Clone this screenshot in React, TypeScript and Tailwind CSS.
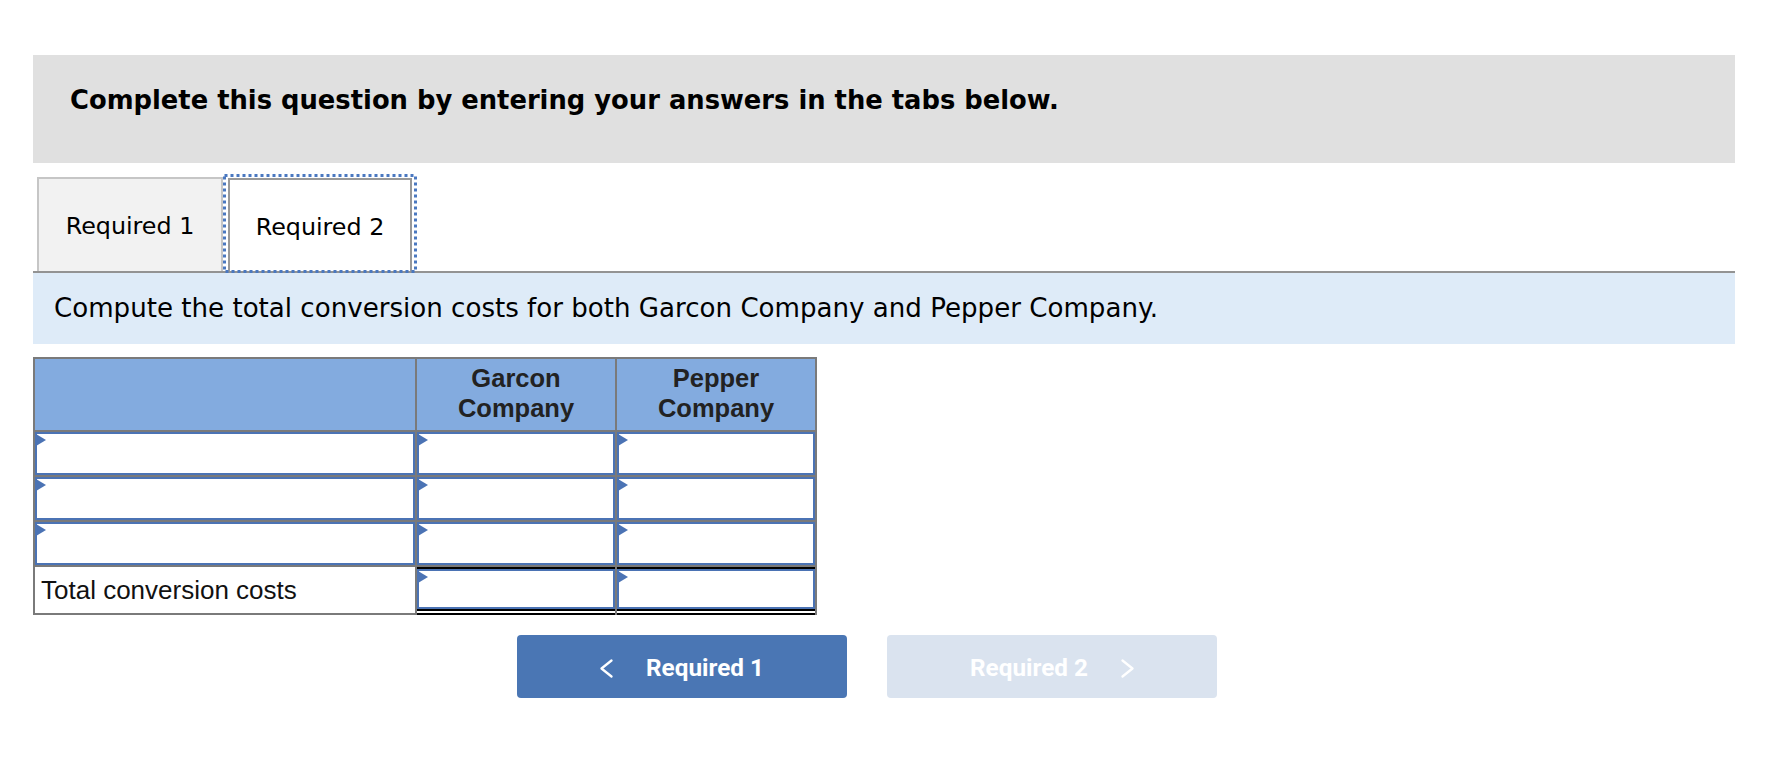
import React from 'react';

function Arrow({ dir }: { dir: 'left' | 'right' }) {
  return (
    <svg width="13" height="19" viewBox="0 0 13 19" fill="none">
      <polyline
        points={dir === 'left' ? '11.5,1.5 1.5,9.5 11.5,17.5' : '1.5,1.5 11.5,9.5 1.5,17.5'}
        stroke="white"
        strokeWidth="2.3"
        strokeLinecap="round"
        strokeLinejoin="round"
      />
    </svg>
  );
}

function Field({ className = '' }: { className?: string }) {
  return (
    <div className={`relative border-2 border-[#4b73b4] bg-white ${className}`}>
      <span className="absolute -left-[1px] top-0 h-0 w-0 border-y-[6px] border-l-[10px] border-y-transparent border-l-[#4b73b4]" />
    </div>
  );
}

function TotalField() {
  return (
    <div className="flex flex-col bg-white">
      <div className="h-[2px] bg-black" />
      <Field className="h-[40px]" />
      <div className="h-[2px] bg-black" />
      <div className="h-[2px] bg-white" />
      <div className="h-[2px] bg-black" />
    </div>
  );
}

export default function App() {
  const rows = [0, 1, 2];

  return (
    <div className="min-h-[778px] bg-white px-[33px] pt-[55px] w-[1768px] font-['DejaVu_Sans',Verdana,sans-serif]">
      <div className="h-[108px] bg-[#e0e0e0] pl-[37px] pt-[30px]">
        <h1 className="text-[25.8px] leading-[30px] font-bold text-black">
          Complete this question by entering your answers in the tabs below.
        </h1>
      </div>

      {/* tabs */}
      <div className="mt-[11px] flex items-end border-b-2 border-[#939393] pl-[4px]">
        <div className="flex h-[94px] w-[186px] items-center justify-center border-2 border-b-0 border-[#c6c6c6] bg-[#f2f2f2] pt-[4px] text-[23.8px] text-black">
          Required 1
        </div>
        <div className="relative flex h-[97px] w-[194px] flex-col px-[5px] pt-[4px]">
          <div className="flex flex-1 items-center justify-center border-2 border-b-0 border-[#999] bg-white pt-[4px] text-[23.8px] text-black">
            Required 2
          </div>
          <svg className="absolute left-0 top-0 h-[99px] w-[194px]" viewBox="0 0 194 99" fill="none">
            <rect x="1.5" y="1.5" width="191" height="96" stroke="#4a78c0" strokeWidth="3" strokeDasharray="3 3" />
          </svg>
        </div>
      </div>

      <div className="flex h-[71px] items-center bg-[#deebf8] pl-[21px] pt-[1px] text-[26.1px] text-black">
        Compute the total conversion costs for both Garcon Company and Pepper Company.
      </div>

      {/* table */}
      <div className="mt-[13px] grid w-[784px] grid-cols-[380px_198px_198px] grid-rows-[71px_43px_43px_43px_48px] gap-[2px] bg-[#7a7a7a] p-[2px] pb-0 font-['Liberation_Sans',Arial,sans-serif]">
        <div className="bg-[#83abdf]" />
        <div className="flex items-center justify-center bg-[#83abdf] pb-[3px] text-center text-[25.5px] leading-[30px] font-bold text-[#222]">
          Garcon<br />Company
        </div>
        <div className="flex items-center justify-center bg-[#83abdf] pb-[3px] text-center text-[25.5px] leading-[30px] font-bold text-[#222]">
          Pepper<br />Company
        </div>

        {rows.map((r) => (
          <React.Fragment key={r}>
            <Field />
            <Field />
            <Field />
          </React.Fragment>
        ))}

        <div className="flex items-center border-b-2 border-[#7a7a7a] bg-white pl-[6px] text-[26px] text-[#111]">
          Total conversion costs
        </div>
        <TotalField />
        <TotalField />
      </div>

      {/* nav buttons */}
      <div className="mt-[20px] ml-[484px] flex gap-[40px] font-['Roboto',sans-serif]">
        <button className="flex h-[63px] w-[330px] items-center justify-center gap-[33px] rounded-[4px] bg-[#4a76b4] pt-[3px] text-[24.3px] font-bold text-white">
          <Arrow dir="left" />
          <span>Required 1</span>
        </button>
        <button className="flex h-[63px] w-[330px] items-center justify-center gap-[33px] rounded-[4px] bg-[#dae3ef] pt-[3px] text-[24.3px] font-bold text-white">
          <span>Required 2</span>
          <Arrow dir="right" />
        </button>
      </div>
    </div>
  );
}
